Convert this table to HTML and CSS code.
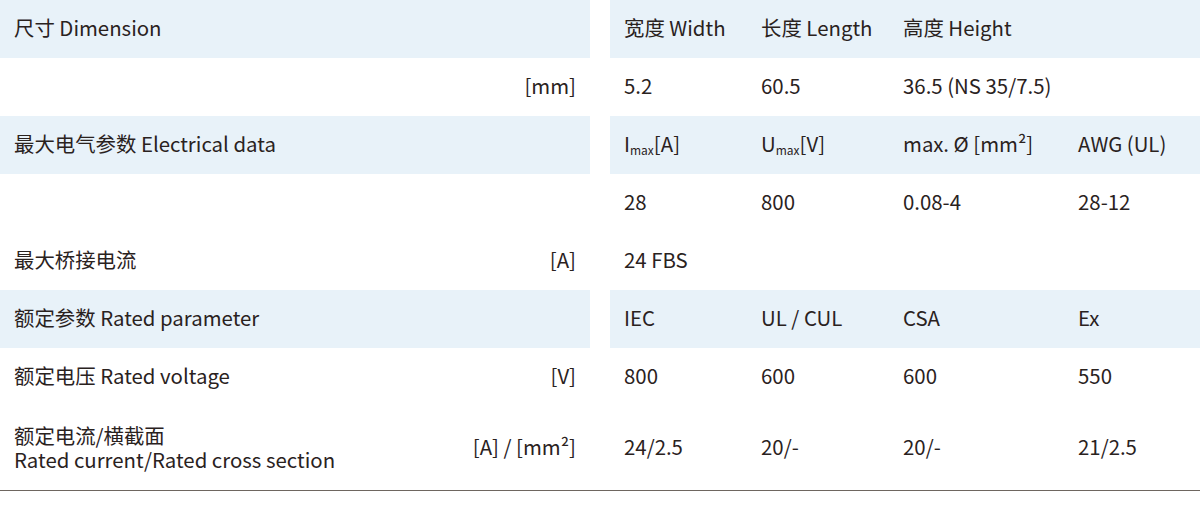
FILE: index.html
```html
<!DOCTYPE html>
<html lang="zh">
<head>
<meta charset="utf-8">
<link rel="stylesheet" href="styles.css">
</head>
<body>
<div class="table">
  <div class="row head">
    <div class="lab"><span>尺寸 Dimension</span></div>
    <div class="vals"><span>宽度 Width</span><span>长度 Length</span><span>高度 Height</span><span></span></div>
  </div>
  <div class="row">
    <div class="lab"><span></span><span class="unit">[mm]</span></div>
    <div class="vals"><span>5.2</span><span>60.5</span><span class="wide">36.5 (NS 35/7.5)</span><span></span></div>
  </div>
  <div class="row head">
    <div class="lab"><span>最大电气参数 Electrical data</span></div>
    <div class="vals"><span>I<sub>max</sub>[A]</span><span>U<sub>max</sub>[V]</span><span>max. Ø [mm²]</span><span>AWG (UL)</span></div>
  </div>
  <div class="row">
    <div class="lab"><span></span></div>
    <div class="vals"><span>28</span><span>800</span><span>0.08-4</span><span>28-12</span></div>
  </div>
  <div class="row">
    <div class="lab"><span>最大桥接电流</span><span class="unit">[A]</span></div>
    <div class="vals"><span>24 FBS</span><span></span><span></span><span></span></div>
  </div>
  <div class="row head">
    <div class="lab"><span>额定参数 Rated parameter</span></div>
    <div class="vals"><span>IEC</span><span>UL / CUL</span><span>CSA</span><span>Ex</span></div>
  </div>
  <div class="row">
    <div class="lab"><span>额定电压 Rated voltage</span><span class="unit">[V]</span></div>
    <div class="vals"><span>800</span><span>600</span><span>600</span><span>550</span></div>
  </div>
  <div class="row tall">
    <div class="lab"><span class="two">额定电流/横截面<br>Rated current/Rated cross section</span><span class="unit">[A] / [mm²]</span></div>
    <div class="vals"><span>24/2.5</span><span>20/-</span><span>20/-</span><span>21/2.5</span></div>
  </div>
</div>
</body>
</html>
```

FILE: styles.css
```css
html, body {
  margin: 0;
  padding: 0;
  background: #fff;
}
body {
  font-family: "Noto Sans CJK SC", "Noto Sans", sans-serif;
  font-size: 20.4px;
  line-height: 24px;
  color: #2a221e;
  width: 1200px;
}
.table {
  display: flex;
  flex-direction: column;
}
.row {
  display: flex;
  height: 58px;
}
.row.tall {
  height: 84px;
  border-bottom: 1px solid #6e6660;
}
.lab {
  width: 590px;
  margin-right: 20px;
  box-sizing: border-box;
  padding: 0 14px 4px;
  display: flex;
  align-items: center;
  justify-content: space-between;
}
.two {
  line-height: 24px;
  padding-top: 1px;
}
.vals {
  flex: 1;
  display: grid;
  grid-template-columns: 137px 142px 175px 1fr;
  align-items: center;
  box-sizing: border-box;
  padding-bottom: 4px;
}
.vals span {
  padding-left: 14px;
  white-space: nowrap;
}
.head .lab,
.head .vals {
  background: #e8f2f9;
}
.unit {
  white-space: nowrap;
}
sub {
  font-size: 12px;
  vertical-align: -3px;
  line-height: 0;
}
```
